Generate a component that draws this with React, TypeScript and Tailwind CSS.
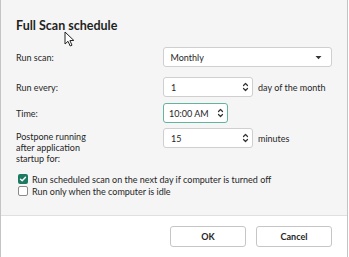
import React from "react";

function Spinner() {
  return (
    <svg width="7" height="10" viewBox="0 0 7 10" fill="none" stroke="#333" strokeWidth="1.2" strokeLinecap="round" strokeLinejoin="round">
      <path d="M1.5 3.5 L3.5 1.5 L5.5 3.5" />
      <path d="M1.5 6.5 L3.5 8.5 L5.5 6.5" />
    </svg>
  );
}

function Chevron() {
  return (
    <svg width="7" height="5" viewBox="0 0 7 5" fill="#333">
      <path d="M0.5 1 L6.5 1 L3.5 4.2 Z" />
    </svg>
  );
}

function Cursor() {
  return (
    <svg width="11" height="17" viewBox="0 0 11 17" className="absolute left-[64px] top-[31px]">
      <path d="M1 1 L1 13 L4 10.3 L6.2 15 L8 14.2 L5.9 9.6 L9.8 9.4 Z" fill="#fff" stroke="#222" strokeWidth="1" strokeLinejoin="round" />
    </svg>
  );
}

function Check({ checked, label }: { checked?: boolean; label: string }) {
  return (
    <div className="flex items-center gap-[4px] h-[12px]">
      {checked ? (
        <span className="w-[10px] h-[10px] rounded-[2px] bg-[#1c7a62] flex items-center justify-center">
          <svg width="8" height="8" viewBox="0 0 8 8" fill="none" stroke="#fff" strokeWidth="1.4" strokeLinecap="round" strokeLinejoin="round">
            <path d="M1.5 4.2 L3.2 5.8 L6.5 2.2" />
          </svg>
        </span>
      ) : (
        <span className="w-[10px] h-[10px] rounded-[2px] border border-[#8a8a8a] bg-white" />
      )}
      <span className="whitespace-nowrap">{label}</span>
    </div>
  );
}

const box = "h-[20px] bg-white border border-[#cfcfcf] rounded-[3px] flex items-center justify-between";

export default function App() {
  return (
    <div
      className="relative w-[349px] h-[257px] bg-white text-[#262626] text-[9px] leading-[11px] overflow-hidden"
      style={{ fontFamily: 'Lato, "Noto Sans", sans-serif' }}
    >
      <div className="w-[348px] h-[257px] border-l border-r border-[#c4c4c4] flex flex-col">
        <div className="h-[216px] bg-[#f5f5f5] border-b border-[#e0e0e0] pl-[15px] pr-[15px]">
          <h1 className="pt-[18px] text-[12.5px] leading-[16px] font-bold text-[#1f1f1f]">Full Scan schedule</h1>

          <div className="mt-[13px] flex items-center h-[20px]">
            <span className="w-[147px]">Run scan:</span>
            <div className={`${box} w-[170px] pl-[7px] pr-[9px]`}>
              <span>Monthly</span>
              <Chevron />
            </div>
          </div>

          <div className="mt-[10px] flex items-center h-[20px]">
            <span className="w-[147px]">Run every:</span>
            <div className={`${box} w-[90px] pl-[7px] pr-[3px]`}>
              <span>1</span>
              <Spinner />
            </div>
            <span className="ml-[5px] whitespace-nowrap">day of the month</span>
          </div>

          <div className="mt-[6px] flex items-center h-[20px]">
            <span className="w-[147px]">Time:</span>
            <div className={`${box} !border-[#62b3a0] w-[65px] pl-[5px] pr-[3px]`}>
              <span>10:00 AM</span>
              <Spinner />
            </div>
          </div>

          <div className="mt-[5px] flex items-start">
            <span className="w-[147px] pt-[3px]">
              Postpone running
              <br />
              after application
              <br />
              startup for:
            </span>
            <div className="flex items-center">
              <div className={`${box} w-[90px] pl-[7px] pr-[3px]`}>
                <span>15</span>
                <Spinner />
              </div>
              <span className="ml-[5px]">minutes</span>
            </div>
          </div>

          <div className="mt-[9px] pl-[2px] flex flex-col">
            <Check checked label="Run scheduled scan on the next day if computer is turned off" />
            <Check label="Run only when the computer is idle" />
          </div>
        </div>

        <div className="flex-1 flex justify-end items-start gap-[10px] pt-[10px] pr-[15px]">
          <button className="w-[76px] h-[21px] bg-white border border-[#c6c6c6] rounded-[3px] font-bold">OK</button>
          <button className="w-[76px] h-[21px] bg-white border border-[#c6c6c6] rounded-[3px] font-bold">Cancel</button>
        </div>
      </div>
      <Cursor />
    </div>
  );
}
